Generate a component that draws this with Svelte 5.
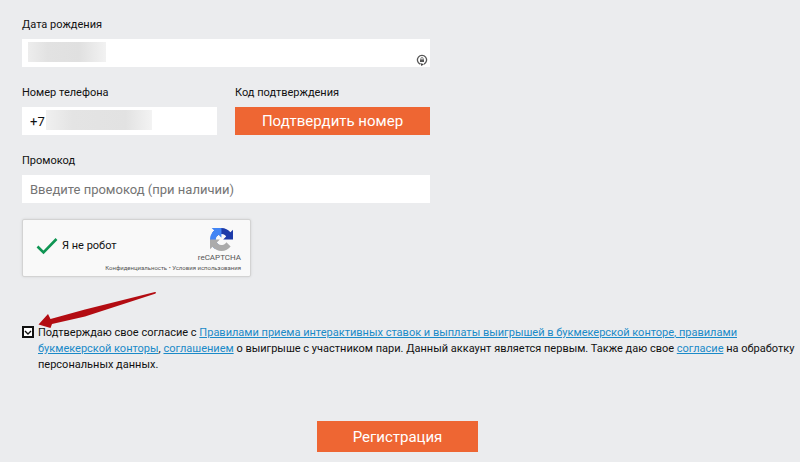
<script lang="ts">
  let birthDate = $state("");
  let phone = $state("+7");
  let promo = $state("");
  let agreed = $state(true);

  function submit(event: SubmitEvent) {
    event.preventDefault();
  }
</script>

<form class="page" onsubmit={submit}>
  <div class="fields">
    <div class="field">
      <label for="birth">Дата рождения</label>
      <div class="control">
        <input id="birth" type="text" bind:value={birthDate} />
        <span class="mask mask-date"></span>
        <svg class="key" viewBox="0 0 12 12" aria-hidden="true">
          <path d="M4 10.1A4.6 4.6 0 1 1 8 10.1" fill="none" stroke="#555" stroke-width="1.3" />
          <path d="M4.2 9 8 10.3 5.4 12z" fill="#444" />
          <rect x="4" y="5.4" width="4" height="2.6" fill="#555" />
          <path d="M4.8 5.6V4.7a1.2 1.2 0 0 1 2.4 0v.9" fill="none" stroke="#666" stroke-width=".8" />
        </svg>
      </div>
    </div>

    <div class="pair">
      <div class="field">
        <label for="phone">Номер телефона</label>
        <div class="control">
          <input id="phone" type="tel" bind:value={phone} />
          <span class="mask mask-phone"></span>
        </div>
      </div>
      <div class="field">
        <span id="code">Код подтверждения</span>
        <button class="confirm" type="button" aria-describedby="code">Подтвердить номер</button>
      </div>
    </div>

    <div class="field">
      <label for="promo">Промокод</label>
      <div class="control">
        <input id="promo" type="text" placeholder="Введите промокод (при наличии)" bind:value={promo} />
      </div>
    </div>
  </div>

  <div class="captcha">
    <div class="status">
      <svg class="tick" viewBox="0 0 22 18" aria-hidden="true">
        <path d="M1.5 9.5 7.5 15.5 20.5 2" fill="none" stroke="#0f9553" stroke-width="2.6" />
      </svg>
      <span>Я не робот</span>
    </div>
    <div class="brand">
      <svg class="logo" viewBox="0 0 64 64" aria-hidden="true">
        <path fill="#1c3aa9" d="M64 31.955l-.033-1.37V4.687l-7.16 7.16C50.948 4.674 42.033.093 32.05.093c-10.4 0-19.622 4.96-25.458 12.64l11.736 11.86a15.55 15.55 0 0 1 4.754-5.334c2.05-1.6 4.952-2.906 8.968-2.906.485 0 .86.057 1.135.163 4.976.393 9.288 3.14 11.828 7.124l-8.307 8.307L64 31.953" />
        <path fill="#4285f4" d="M31.862.094l-1.37.033H4.594l7.16 7.16C4.58 13.147 0 22.06 0 32.046c0 10.4 4.96 19.622 12.64 25.458L24.5 45.768a15.55 15.55 0 0 1-5.334-4.754c-1.6-2.05-2.906-4.952-2.906-8.968 0-.485.057-.86.163-1.135.393-4.976 3.14-9.288 7.124-11.828l8.307 8.307L31.86.095" />
        <path fill="#ababab" d="M.001 32.045l.033 1.37v25.898l7.16-7.16c5.86 7.173 14.774 11.754 24.76 11.754 10.4 0 19.622-4.96 25.458-12.64l-11.736-11.86a15.55 15.55 0 0 1-4.754 5.334c-2.05 1.6-4.952 2.906-8.968 2.906-.485 0-.86-.057-1.135-.163-4.976-.393-9.288-3.14-11.828-7.124l8.307-8.307c-10.522.04-22.4.066-27.295-.005" />
      </svg>
      <span class="name">reCAPTCHA</span>
      <small><a href="#privacy">Конфиденциальность</a> • <a href="#terms">Условия использования</a></small>
    </div>
  </div>

  <div class="consent">
    <input id="agree" type="checkbox" bind:checked={agreed} />
    <label for="agree">Подтверждаю свое согласие с <a href="#rules">Правилами приема интерактивных ставок и выплаты выигрышей в букмекерской конторе, правилами букмекерской конторы</a>, <a href="#agreement">соглашением</a> о выигрыше с участником пари. Данный аккаунт является первым. Также даю свое <a href="#consent">согласие</a> на обработку персональных данных.</label>
    <svg class="arrow" viewBox="0 0 120 42" aria-hidden="true">
      <path d="M118 3Q120 3.5 118 4.7L48 27.5 15 35 13.5 39 1.5 35.5 11 25 13.5 30 48 20.5z" fill="#b30c12" />
    </svg>
  </div>

  <button class="register" type="submit">Регистрация</button>
</form>

<style>
  :global(body) { margin:0; background:#ebecee; }
  .page { display:flex; flex-direction:column; padding:17px 0 11px 22px; color:#111; font-family:Roboto,"Liberation Sans",sans-serif; font-size:11px; line-height:16px; }
  .fields { display:grid; gap:18px; width:100%; max-width:408px; }
  .field { display:grid; gap:6px; min-width:0; }
  .pair { display:grid; grid-template-columns:1fr 1fr; gap:18px; }
  .control { position:relative; display:flex; }
  .control input { box-sizing:border-box; width:100%; height:28px; padding:0 8px; border:0; border-radius:0; background:#fff; color:#111; font:13px Roboto,"Liberation Sans",sans-serif; outline:none; }
  .control input::placeholder { color:#757575; opacity:1; }
  .mask { position:absolute; top:3px; height:20px; pointer-events:none; }
  .mask-date { left:6px; width:78px; background:linear-gradient(90deg,#ededed,#e2e2e2 25%,#e0e0e0 65%,#f2f2f2); }
  .mask-phone { left:24px; width:106px; background:linear-gradient(90deg,#f0f0f0,#e4e4e4 25%,#e2e2e2 75%,#f3f3f3); }
  .key { position:absolute; right:2px; bottom:1px; width:12px; height:12px; }
  button { border:0; border-radius:0; background:#ee6633; color:#fff; font-family:inherit; cursor:pointer; }
  .confirm { height:28px; padding:0; font-size:15px; }
  .captcha { box-sizing:border-box; display:flex; justify-content:space-between; width:100%; max-width:229px; height:58px; margin-top:16px; padding:8px 9px 0 13px; border:1px solid #d3d3d3; border-radius:2px; background:#f9f9f9; box-shadow:0 0 3px rgba(0,0,0,.1); }
  .status { display:flex; gap:4px; height:36px; align-items:center; white-space:nowrap; }
  .tick { width:22px; height:18px; }
  .brand { display:flex; flex-direction:column; align-items:flex-end; width:0; color:#555; white-space:nowrap; }
  .logo { flex:none; width:23px; height:23px; margin-right:8px; }
  .name { margin-top:1px; font-size:8px; line-height:12px; }
  .brand small { font-size:6px; line-height:7px; }
  .brand a { color:inherit; text-decoration:none; }
  .consent { position:relative; display:flex; gap:4px; align-items:flex-start; margin-top:48px; }
  .consent input { flex:none; appearance:none; width:12px; height:12px; margin:1px 0 0; border:2px solid #111; background:#fff; }
  .consent input:checked { background:#fff url("data:image/svg+xml,%3Csvg xmlns='http://www.w3.org/2000/svg' viewBox='0 0 8 8'%3E%3Cpath d='M1 3 4 6 7 3' fill='none' stroke='%23111' stroke-width='1.4'/%3E%3C/svg%3E") center/8px no-repeat; }
  .consent a { color:#1a8ac8; text-decoration:underline; }
  .arrow { position:absolute; left:15px; top:-36px; width:120px; height:42px; pointer-events:none; }
  .register { align-self:center; min-width:161px; height:31px; margin:48px 27px 0 0; padding:0 20px; font-size:15px; }
</style>
